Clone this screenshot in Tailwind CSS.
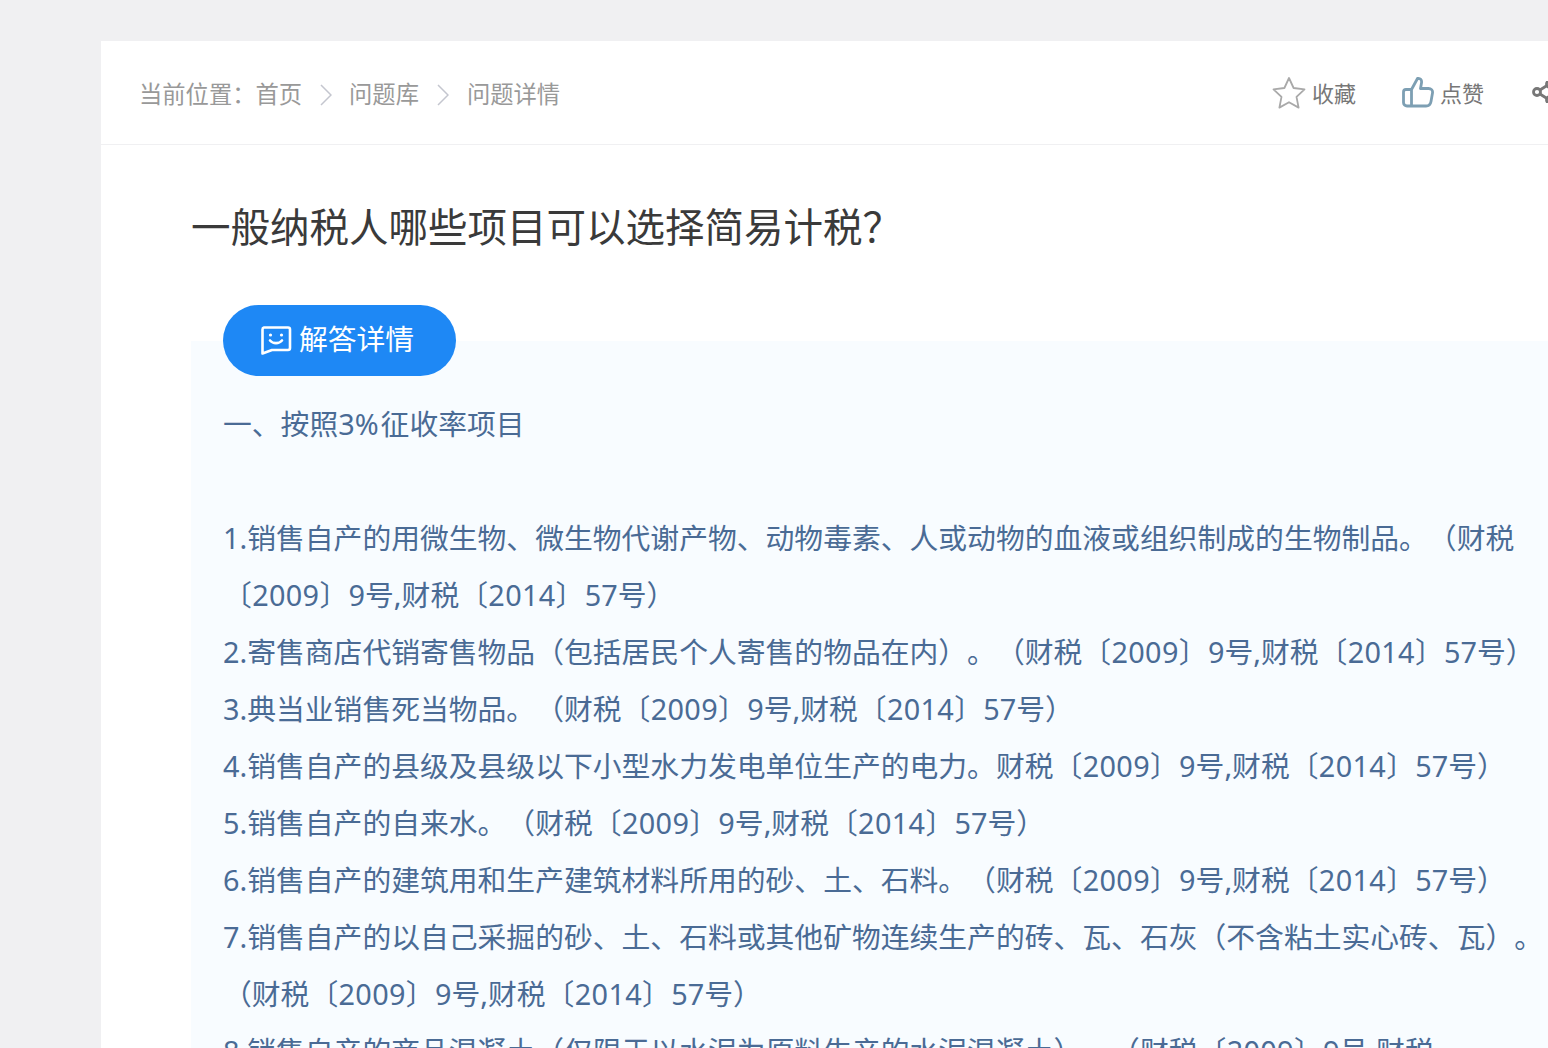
<!DOCTYPE html>
<html lang="zh-CN">
<head>
<meta charset="utf-8">
<script src="https://cdn.jsdelivr.net/npm/@tailwindcss/browser@4"></script>
</head>
<body class="bg-[#f0f0f2] overflow-hidden h-[1048px] font-['Noto_Sans','Noto_Sans_CJK_SC',sans-serif] [text-spacing-trim:space-all]">
<div class="ml-[101px] mt-[41px] w-[1600px] bg-white h-[1007px] overflow-hidden">
  <header class="h-[104px] border-b border-[#f0f0f2] flex items-center pl-[38px] pt-[4px] text-[23.300px] text-[#999] w-[1447px]">
    <span>当前位置：</span><span>首页</span>
    <svg class="w-[12px] h-[22px] ml-[18px] mr-[17px]" viewBox="0 0 12 22" fill="none" stroke="#c4c6cf" stroke-width="1.5"><path d="M1 1l10 10L1 21"/></svg>
    <span>问题库</span>
    <svg class="w-[12px] h-[22px] mx-[18px]" viewBox="0 0 12 22" fill="none" stroke="#c4c6cf" stroke-width="1.5"><path d="M1 1l10 10L1 21"/></svg>
    <span>问题详情</span>
    <div class="ml-auto flex items-center text-[22px] text-[#777] -mr-[4px] -mt-[2px]">
      <svg class="w-[34px] h-[34px] -mt-[2px]" viewBox="0 0 34 34" fill="none" stroke="#a9a9a9" stroke-width="1.8" stroke-linejoin="round"><path d="M17 2l4.600 10 10.900 1.300-8 7.500 2.100 10.800-9.600-5.400-9.600 5.400 2.100-10.800-8-7.500 10.900-1.300z"/></svg>
      <span class="ml-[6px]">收藏</span>
      <svg class="ml-[46px] w-[32px] h-[32px] -mt-[3px]" viewBox="0 0 32 32" fill="none" stroke="#7d9fb3" stroke-width="2.800" stroke-linejoin="round"><path d="M9.500 13.500 15.500 2.500c3-.5 4.500 1.500 4 4.500l-1 5.500h8c2.500 0 4.500 1.500 4 4.500l-1.500 8.500c-.5 3-2.500 4.500-5 4.500H5c-2 0-3.500-1.500-3.500-3.500V16c0-1.500 1-2.500 2.500-2.500h5.500zM9.500 13.500V30.500"/></svg>
      <span class="ml-[6px]">点赞</span>
      <svg class="ml-[48px] w-[20px] h-[22px] shrink-0 -mt-[3px]" viewBox="0 0 20 22" fill="none" stroke="#777" stroke-width="2.800"><circle cx="5" cy="11" r="3.500"/><circle cx="18" cy="3" r="3.500"/><circle cx="18" cy="19" r="3.500"/><path d="M8 9l7-4.500M8 13l7 4.500"/></svg>
    </div>
  </header>
  <main class="pl-[90px]">
    <h1 class="text-[39.500px] leading-[56px] text-[#3a3a3a] font-normal mt-[54px] whitespace-nowrap">一般纳税人哪些项目可以选择简易计税？</h1>
    <section class="relative mt-[86px] w-[1400px] bg-[#f8fcff] pl-[32px] pt-[54px] text-[28.800px] leading-[57px] text-[#4a6b95]">
      <div class="absolute left-[32px] -top-[36px] w-[233px] h-[71px] pr-[5px] pb-[2px] rounded-full bg-[#1e88f5] flex items-center justify-center text-white leading-none">
        <svg class="w-[32px] h-[30px] mr-[7px]" viewBox="0 0 32 30" fill="none" stroke="white" stroke-width="2.600" stroke-linejoin="round"><path d="M4 2.500h24a2 2 0 0 1 2 2V23a2 2 0 0 1-2 2H12l-9.500 3.500V4.500a2 2 0 0 1 1.500-2z"/><circle cx="10.500" cy="10" r="1.600" fill="white" stroke="none"/><circle cx="21.500" cy="10" r="1.600" fill="white" stroke="none"/><path d="M10 15.500c3 3.500 9 3.500 12 0" stroke-linecap="round"/></svg>
        <span>解答详情</span>
      </div>
      <p class="whitespace-nowrap">一、按照3<span class="tracking-[2px]">%</span>征收率项目</p>
      <p class="h-[57px]"></p>
      <p class="whitespace-nowrap">1.销售自产的用微生物、微生物代谢产物、动物毒素、人或动物的血液或组织制成的生物制品。（财税</p>
      <p class="whitespace-nowrap"><span class="tracking-[0.35px]">〔2009〕</span>9号,财税<span class="tracking-[0.35px]">〔2014〕</span>57号）</p>
      <p class="whitespace-nowrap">2.寄售商店代销寄售物品（包括居民个人寄售的物品在内）。（财税<span class="tracking-[0.35px]">〔2009〕</span>9号,财税<span class="tracking-[0.35px]">〔2014〕</span>57号）</p>
      <p class="whitespace-nowrap">3.典当业销售死当物品。（财税<span class="tracking-[0.35px]">〔2009〕</span>9号,财税<span class="tracking-[0.35px]">〔2014〕</span>57号）</p>
      <p class="whitespace-nowrap">4.销售自产的县级及县级以下小型水力发电单位生产的电力。财税<span class="tracking-[0.35px]">〔2009〕</span>9号,财税<span class="tracking-[0.35px]">〔2014〕</span>57号）</p>
      <p class="whitespace-nowrap">5.销售自产的自来水。（财税<span class="tracking-[0.35px]">〔2009〕</span>9号,财税<span class="tracking-[0.35px]">〔2014〕</span>57号）</p>
      <p class="whitespace-nowrap">6.销售自产的建筑用和生产建筑材料所用的砂、土、石料。（财税<span class="tracking-[0.35px]">〔2009〕</span>9号,财税<span class="tracking-[0.35px]">〔2014〕</span>57号）</p>
      <p class="whitespace-nowrap">7.销售自产的以自己采掘的砂、土、石料或其他矿物连续生产的砖、瓦、石灰（不含粘土实心砖、瓦）。</p>
      <p class="whitespace-nowrap">（财税<span class="tracking-[0.35px]">〔2009〕</span>9号,财税<span class="tracking-[0.35px]">〔2014〕</span>57号）</p>
      <p class="whitespace-nowrap">8.销售自产的商品混凝土（仅限于以水泥为原料生产的水泥混凝土）。（财税<span class="tracking-[0.35px]">〔2009〕</span>9号,财税</p>
    </section>
  </main>
</div>
</body>
</html>
